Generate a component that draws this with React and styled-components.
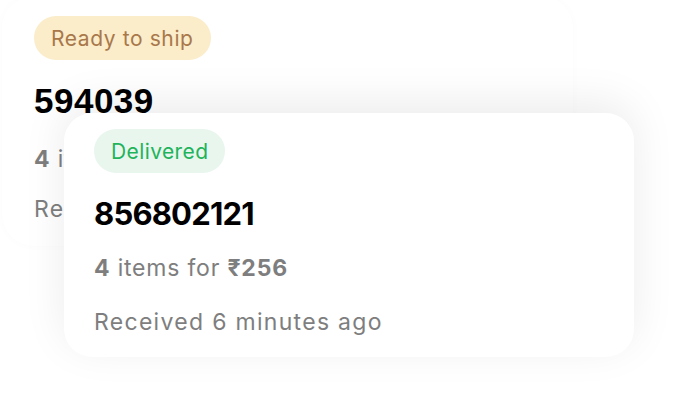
import React from 'react'
import styled, { createGlobalStyle } from 'styled-components'

const GlobalStyle = createGlobalStyle`
  html, body {
    margin: 0;
    padding: 0;
    background: #ffffff;
  }
  body {
    font-family: 'Inter', 'Noto Sans', sans-serif;
    overflow: hidden;
  }
`

const Stage = styled.div`
  display: grid;
  width: 696px;
  height: 404px;
  overflow: hidden;
`

const Card = styled.div`
  grid-area: 1 / 1;
  align-self: start;
  justify-self: start;
  box-sizing: border-box;
  display: flex;
  flex-direction: column;
  align-items: flex-start;
  background: #ffffff;
`

const BackCard = styled(Card)`
  margin: -4px 0 0 2px;
  width: 571px;
  height: 250px;
  padding: 20px 32px;
  border-radius: 32px;
  box-shadow: 0 0 10px rgba(0, 0, 0, 0.02);
`

const FrontCard = styled(Card)`
  margin: 113px 0 0 64px;
  width: 570px;
  height: 244px;
  padding: 16px 30px;
  border-radius: 28px;
  box-shadow: 0 -10px 44px rgba(0, 0, 0, 0.08);
  z-index: 1;
`

const Badge = styled.span`
  display: inline-flex;
  align-items: center;
  height: 44px;
  padding: 0 17px;
  border-radius: 22px;
  font-size: 21px;
  letter-spacing: ${p => (p.$tone === 'green' ? 0.4 : 0.6)}px;
  background: ${p => (p.$tone === 'green' ? '#e8f6ee' : '#fbecca')};
  color: ${p => (p.$tone === 'green' ? '#1fb35b' : '#a8784a')};
`

const OrderNo = styled.div`
  margin-top: ${p => p.$top}px;
  font-size: ${p => p.$size}px;
  font-weight: 700;
  color: #000000;
  line-height: 1;
  letter-spacing: ${p => p.$spacing || 0}px;
  font-family: ${p => (p.$arial ? "'Liberation Sans', Arial, sans-serif" : "'Inter', sans-serif")};
`

const Meta = styled.div`
  margin-top: ${p => p.$top}px;
  font-size: 23px;
  line-height: 1;
  letter-spacing: ${p => p.$spacing || 0.8}px;
  color: #7e7e7e;
  white-space: nowrap;

  b {
    font-weight: 700;
  }
`

export default function App() {
  return (
    <>
      <GlobalStyle />
      <Stage>
        <BackCard>
          <Badge>Ready to ship</Badge>
          <OrderNo $top={23} $size={35} $spacing={0.5} $arial>594039</OrderNo>
          <Meta $top={30}><b>4</b> items for <b>₹180</b></Meta>
          <Meta $top={27} $spacing={1.3}>Received 2 minutes ago</Meta>
        </BackCard>
        <FrontCard>
          <Badge $tone="green">Delivered</Badge>
          <OrderNo $top={25} $size={31} $spacing={-0.8}>856802121</OrderNo>
          <Meta $top={28}><b>4</b> items for <b>₹256</b></Meta>
          <Meta $top={31} $spacing={1.3}>Received 6 minutes ago</Meta>
        </FrontCard>
      </Stage>
    </>
  )
}
